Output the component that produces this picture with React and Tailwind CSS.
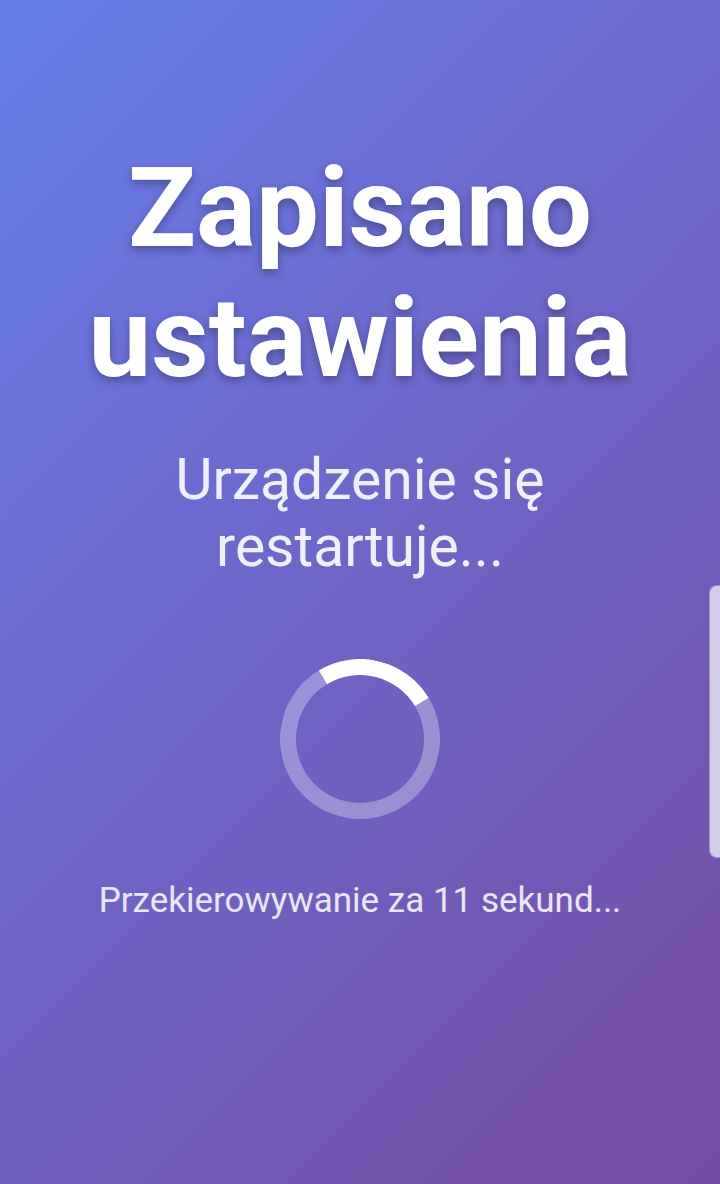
export default function App() {
  return (
    <div
      className="relative min-h-[1184px] w-full overflow-hidden bg-[linear-gradient(135deg,#667eea_0%,#764ba2_100%)] text-white"
      style={{ fontFamily: 'Roboto, "Noto Sans", sans-serif' }}
    >
      <div className="flex flex-col items-center px-6 pt-[143px] text-center">
        <h1 className="text-[112px] font-bold leading-[130px] [text-shadow:0_4px_10px_rgba(0,0,0,0.3)]">
          Zapisano ustawienia
        </h1>
        <p className="mt-[43px] w-[440px] text-[57px] leading-[67px] text-white/90">
          Urządzenie się restartuje...
        </p>
        <div className="mt-[79px] h-[160px] w-[160px] rotate-[14deg] rounded-full border-[16px] border-white/30 border-t-white" />
        <p className="mt-[61px] text-[35px] leading-[42px] text-white/85">
          Przekierowywanie za 11 sekund...
        </p>
      </div>
      <div className="absolute right-0 top-[585px] h-[273px] w-[11px] rounded-l-[8px] border border-r-0 border-[#9d92c4] bg-[#d3cde8]" />
    </div>
  );
}
